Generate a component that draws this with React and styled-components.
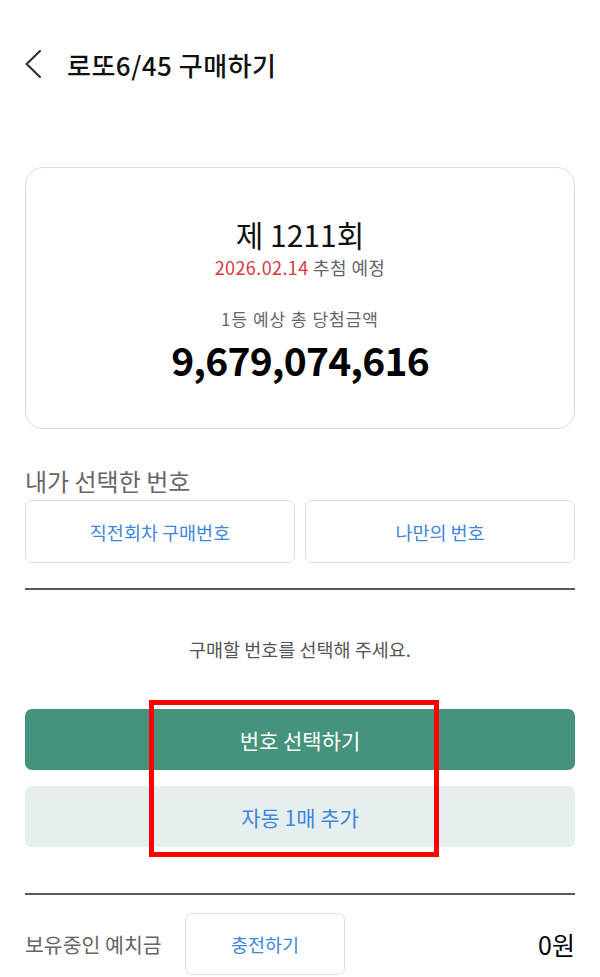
import React from "react";
import styled, { createGlobalStyle } from "styled-components";

const GlobalStyle = createGlobalStyle`
  html, body {
    margin: 0;
    padding: 0;
    background: #fff;
  }
  body {
    font-family: "Noto Sans CJK KR", "Noto Sans", sans-serif;
    color: #111;
  }
  * {
    box-sizing: border-box;
  }
`;

const Page = styled.div`
  position: relative;
  width: 600px;
  min-height: 977px;
  padding: 38px 25px 0;
`;

const Header = styled.header`
  display: flex;
  align-items: center;
  height: 52px;
`;

const BackButton = styled.button`
  display: flex;
  align-items: center;
  padding: 0;
  border: 0;
  background: none;
  width: 18px;
  height: 30px;
`;

const Title = styled.h1`
  margin: 0 0 0 24px;
  font-size: 26px;
  font-weight: 500;
  color: #111;
  letter-spacing: 0.5px;
`;

const DrawCard = styled.section`
  margin-top: 77px;
  height: 262px;
  border: 1.5px solid #dcdcdc;
  border-radius: 18px;
  padding-top: 46px;
  display: flex;
  flex-direction: column;
  align-items: center;
`;

const Round = styled.div`
  font-size: 30px;
  line-height: 40px;
  font-weight: 400;
  color: #111;
`;

const DrawDate = styled.div`
  margin-top: 1px;
  font-size: 18px;
  line-height: 24px;
  letter-spacing: 0.4px;
  color: #666;
  span {
    color: #d83a40;
  }
`;

const PrizeLabel = styled.div`
  margin-top: 29px;
  font-size: 17px;
  line-height: 22px;
  letter-spacing: 1px;
  color: #666;
`;

const PrizeAmount = styled.div`
  margin-top: 4px;
  font-size: 39px;
  line-height: 50px;
  font-weight: 700;
  color: #000;
  letter-spacing: -0.8px;
`;

const SectionLabel = styled.h2`
  margin: 36px 0 0;
  font-size: 24px;
  line-height: 32px;
  font-weight: 400;
  color: #666;
`;

const ChoiceRow = styled.div`
  margin-top: 3px;
  display: grid;
  grid-template-columns: 1fr 1fr;
  gap: 10px;
`;

const OutlineButton = styled.button`
  height: ${(p) => p.$h || 63}px;
  width: ${(p) => (p.$w ? `${p.$w}px` : "auto")};
  border: 1.5px solid #dedede;
  border-radius: 7px;
  background: #fff;
  color: #3d87dd;
  font-family: inherit;
  font-size: 18.5px;
`;

const Divider = styled.hr`
  margin: ${(p) => p.$top}px 0 0;
  border: 0;
  height: 2px;
  background: #5a5a5a;
`;

const Prompt = styled.p`
  margin: 46px 0 0;
  text-align: center;
  font-size: 18.5px;
  line-height: 26px;
  color: #555;
`;

const ActionStack = styled.div`
  margin-top: 47px;
  display: flex;
  flex-direction: column;
  gap: 16px;
`;

const ActionButton = styled.button`
  height: 61px;
  border: 0;
  border-radius: 7px;
  font-family: inherit;
  font-size: 21px;
  background: ${(p) => (p.$primary ? "#45937c" : "#e6efed")};
  color: ${(p) => (p.$primary ? "#fff" : "#3d87dd")};
`;

const BalanceRow = styled.div`
  margin-top: 18px;
  display: flex;
  align-items: center;
`;

const BalanceLabel = styled.span`
  flex: 0 0 160px;
  font-size: 20.5px;
  color: #666;
`;

const BalanceValue = styled.span`
  margin-left: auto;
  font-size: 25px;
  color: #000;
`;

const Highlight = styled.div`
  position: absolute;
  left: 149px;
  top: 700px;
  width: 290px;
  height: 157px;
  border: 5px solid #f00;
  pointer-events: none;
`;

const BackIcon = () => (
  <svg width="18" height="30" viewBox="0 0 18 30" fill="none">
    <polyline
      points="15,2 1.6,15 15,28"
      stroke="#333"
      strokeWidth="2.2"
      strokeLinecap="round"
      strokeLinejoin="round"
    />
  </svg>
);

export default function App() {
  return (
    <Page>
      <GlobalStyle />
      <Header>
        <BackButton aria-label="뒤로">
          <BackIcon />
        </BackButton>
        <Title>로또6/45 구매하기</Title>
      </Header>

      <DrawCard>
        <Round>제 1211회</Round>
        <DrawDate>
          <span>2026.02.14</span> 추첨 예정
        </DrawDate>
        <PrizeLabel>1등 예상 총 당첨금액</PrizeLabel>
        <PrizeAmount>9,679,074,616</PrizeAmount>
      </DrawCard>

      <SectionLabel>내가 선택한 번호</SectionLabel>
      <ChoiceRow>
        <OutlineButton>직전회차 구매번호</OutlineButton>
        <OutlineButton>나만의 번호</OutlineButton>
      </ChoiceRow>

      <Divider $top={25} />

      <Prompt>구매할 번호를 선택해 주세요.</Prompt>

      <ActionStack>
        <ActionButton $primary>번호 선택하기</ActionButton>
        <ActionButton>자동 1매 추가</ActionButton>
      </ActionStack>

      <Divider $top={46} />

      <BalanceRow>
        <BalanceLabel>보유중인 예치금</BalanceLabel>
        <OutlineButton $w={160} $h={62}>충전하기</OutlineButton>
        <BalanceValue>0원</BalanceValue>
      </BalanceRow>

      <Highlight />
    </Page>
  );
}
